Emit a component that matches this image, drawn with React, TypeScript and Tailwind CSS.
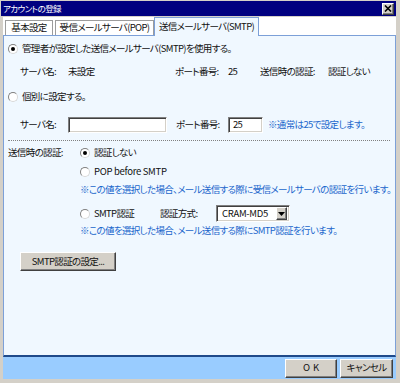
import React from "react";

function Radio({ checked }: { checked?: boolean }) {
  return (
    <span className="inline-flex h-[10px] w-[10px] shrink-0 items-center justify-center rounded-full border border-t-[#808080] border-l-[#808080] border-r-[#d8d8d8] border-b-[#d8d8d8] bg-white">
      {checked && <span className="h-[4px] w-[4px] rounded-full bg-black" />}
    </span>
  );
}

function Sunken({ className, children }: { className?: string; children?: React.ReactNode }) {
  return (
    <div
      className={
        "flex shrink-0 items-center border border-t-[#808080] border-l-[#808080] border-r-white border-b-white bg-white shadow-[inset_1px_1px_0_#404040,inset_-1px_-1px_0_#d4d0c8] " +
        (className ?? "")
      }
    >
      {children}
    </div>
  );
}

function Button({ className, children }: { className?: string; children?: React.ReactNode }) {
  return (
    <div
      className={
        "flex shrink-0 items-center justify-center bg-[#d4d0c8] border border-t-white border-l-white border-r-[#404040] border-b-[#404040] shadow-[inset_-1px_-1px_0_#808080] " +
        (className ?? "")
      }
    >
      {children}
    </div>
  );
}

export default function App() {
  return (
    <div className="flex h-[383px] w-[400px] flex-col whitespace-nowrap bg-[#d4d0c8] pt-[1px] pl-[1px] pr-[4px] pb-[4px] text-[9.5px] leading-none tracking-[-0.65px] text-[#111] font-['Noto_Sans_CJK_JP',sans-serif] [font-feature-settings:'palt']">
      {/* title bar */}
      <div className="flex h-[15px] items-center justify-between bg-[#000080] pl-[2px] pr-[2px]">
        <span className="text-[8.5px] tracking-[-0.6px] text-white">アカウントの登録</span>
        <Button className="h-[12px] w-[12px]">
          <svg width="8" height="7" viewBox="0 0 8 7">
            <path d="M1 0.5 L7 6.5 M7 0.5 L1 6.5" stroke="#000" strokeWidth="1.6" />
          </svg>
        </Button>
      </div>

      {/* tabs */}
      <div className="ml-[2px] mt-[1px] flex h-[18px] items-end bg-white pl-[2px]">
        <div className="flex h-[15px] w-[48px] items-center justify-center border border-b-0 border-[#9c9c9c] bg-white">
          基本設定
        </div>
        <div className="ml-[2px] flex h-[15px] w-[99px] items-center justify-center border border-b-0 border-[#9c9c9c] bg-white">
          受信メールサーバ(POP)
        </div>
        <div className="relative z-10 -mb-[1px] flex h-[19px] w-[105px] items-center justify-center border border-b-0 border-[#7ca0d8] bg-[#f0f8ff] pb-[1px]">
          送信メールサーバ(SMTP)
        </div>
      </div>

      {/* panel */}
      <div className="ml-[2px] flex h-[322px] flex-col border-x border-t border-[#7ca0d8] border-b-2 border-b-[#1f4a8a] bg-[#f0f8ff]">
        <div className="mt-[5px] flex h-[16px] items-center gap-[4px] pl-[4px]">
          <Radio checked />
          <span>管理者が設定した送信メールサーバ(SMTP)を使用する。</span>
        </div>

        <div className="mt-[7px] flex h-[16px] items-center pl-[16px]">
          <span className="w-[48px]">サーバ名:</span>
          <span className="w-[107px]">未設定</span>
          <span className="w-[53px]">ポート番号:</span>
          <span className="w-[32px]">25</span>
          <span className="w-[68px]">送信時の認証:</span>
          <span>認証しない</span>
        </div>

        <div className="mt-[9px] flex h-[16px] items-center gap-[4px] pl-[4px]">
          <Radio />
          <span>個別に設定する。</span>
        </div>

        <div className="mt-[12px] flex h-[16px] items-center pl-[16px]">
          <span className="w-[48px]">サーバ名:</span>
          <Sunken className="h-[16px] w-[99px]" />
          <span className="ml-[9px] w-[52px]">ポート番号:</span>
          <Sunken className="h-[16px] w-[35px] pl-[4px]">25</Sunken>
          <span className="ml-[5px] text-[#1a66cc]">※通常は25で設定します。</span>
        </div>

        <div className="ml-[4px] mr-[5px] mt-[7px] border-t border-dotted border-[#808080]" />

        <div className="mt-[4px] flex h-[16px] items-center pl-[4px]">
          <span className="w-[72px]">送信時の認証:</span>
          <Radio checked />
          <span className="ml-[4px]">認証しない</span>
        </div>

        <div className="mt-[3px] flex h-[16px] items-center gap-[4px] pl-[76px]">
          <Radio />
          <span className="tracking-[-0.3px]">POP before SMTP</span>
        </div>

        <div className="mt-[2px] flex h-[16px] items-center pl-[76px] text-[#1a66cc]">
          ※この値を選択した場合、メール送信する際に受信メールサーバの認証を行います。
        </div>

        <div className="mt-[7px] flex h-[17px] items-center pl-[76px]">
          <Radio />
          <span className="ml-[4px] w-[66px]">SMTP認証</span>
          <span className="w-[56px]">認証方式:</span>
          <Sunken className="h-[17px] w-[74px] justify-between pl-[5px] pr-[2px]">
            <span className="tracking-[-0.3px]">CRAM-MD5</span>
            <Button className="h-[13px] w-[11px]">
              <svg width="7" height="4" viewBox="0 0 7 4">
                <path d="M0 0 H7 L3.5 4 Z" fill="#000" />
              </svg>
            </Button>
          </Sunken>
        </div>

        <div className="mt-[1px] flex h-[16px] items-center pl-[76px] text-[#1a66cc]">
          ※この値を選択した場合、メール送信する際にSMTP認証を行います。
        </div>

        <Button className="ml-[16px] mt-[13px] h-[19px] w-[96px]">SMTP認証の設定...</Button>
      </div>

      {/* bottom bar */}
      <div className="ml-[2px] flex h-[22px] items-center justify-end gap-[3px] bg-[#99ccff] pr-[3px]">
        <Button className="h-[19px] w-[52px] pl-[3px] tracking-[3px]">OK</Button>
        <Button className="h-[19px] w-[53px]">キャンセル</Button>
      </div>
    </div>
  );
}
